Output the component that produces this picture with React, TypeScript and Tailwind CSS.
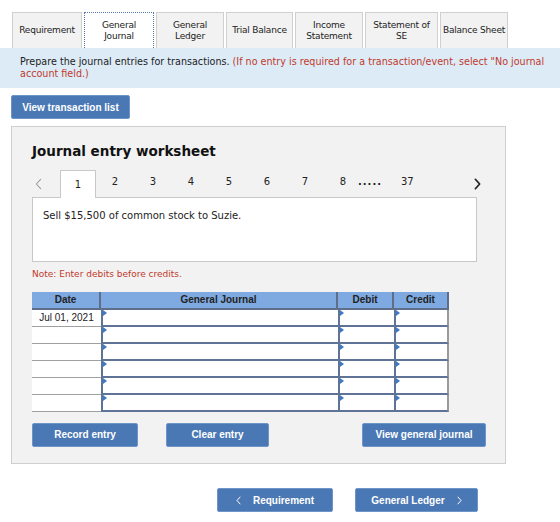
import React from 'react';

const tabs = [
  { label: ['Requirement'], w: 'w-[70px]' },
  { label: ['General', 'Journal'], w: 'w-[70px]', active: true },
  { label: ['General', 'Ledger'], w: 'w-[68px]' },
  { label: ['Trial Balance'], w: 'w-[67px]' },
  { label: ['Income', 'Statement'], w: 'w-[68px]' },
  { label: ['Statement of', 'SE'], w: 'w-[73px]' },
  { label: ['Balance Sheet'], w: 'w-[68px]' },
];

const pages = ['2', '3', '4', '5', '6', '7', '8'];

function Arrow() {
  return <span className="absolute left-0 top-0 w-0 h-0 border-t-[3px] border-b-[3px] border-l-[4px] border-t-transparent border-b-transparent border-l-[#3d78c9]" />;
}

function Chevron({ dir, className = '', stroke = 1.5 }: { dir: 'l' | 'r'; className?: string; stroke?: number }) {
  return (
    <svg viewBox="0 0 8 14" className={className} fill="none" stroke="currentColor" strokeWidth={stroke} strokeLinecap="round" strokeLinejoin="round">
      {dir === 'l' ? <path d="M6.5 1.5 1.5 7l5 5.5" /> : <path d="M1.5 1.5 6.5 7l-5 5.5" />}
    </svg>
  );
}

function Btn({ children, className = '' }: { children: React.ReactNode; className?: string }) {
  return (
    <button
      className={`h-[24px] bg-[#4a78b4] text-white text-[10px] font-bold rounded-[2px] border border-[#6e95c8] flex items-center justify-center gap-[12px] ${className}`}
      style={{ fontFamily: '"Liberation Sans", Arial, sans-serif' }}
    >
      {children}
    </button>
  );
}

export default function App() {
  const rows = ['Jul 01, 2021', '', '', '', '', ''];
  return (
    <div className="w-[560px] h-[522px] bg-white overflow-hidden text-[#222]" style={{ fontFamily: '"DejaVu Sans", Verdana, sans-serif' }}>
      <div className="flex gap-[2px] pl-[12px] pt-[12px]">
        {tabs.map((t, i) => (
          <div
            key={i}
            className={`${t.w} h-[36px] flex flex-col items-center justify-center text-[9px] leading-[11px] text-center tracking-[-0.2px] ${t.active ? 'bg-white border border-dotted border-[#5577aa] border-b-0' : 'bg-[#f2f2f2] border border-[#d0d0d0] border-b-0'}`}
          >
            {t.label.map((l, j) => <span key={j}>{l}</span>)}
          </div>
        ))}
      </div>

      <div className="h-[40px] bg-[#ddebf7] pl-[20px] pt-[8px] text-[9.6px] leading-[12px] whitespace-nowrap overflow-hidden">
        <div>Prepare the journal entries for transactions. <span className="text-[#c0392b]">(If no entry is required for a transaction/event, select "No journal</span></div>
        <div className="text-[#c0392b]">account field.)</div>
      </div>

      <div className="pl-[11px] pt-[7px]">
        <Btn className="w-[119px]">View transaction list</Btn>
      </div>

      <div className="ml-[11px] mt-[7px] w-[495px] h-[338px] bg-[#f2f2f2] border border-[#cfcfcf] pl-[20px] pt-[14px]">
        <div className="text-[13.5px] font-bold text-[#111]">Journal entry worksheet</div>

        <div className="flex items-end mt-[8px] h-[28px] text-[10px]">
          <span className="w-[28px] pl-[3px] pb-[7px] text-[#9a9a9a]"><Chevron dir="l" className="w-[7px] h-[12px]" stroke={1.2} /></span>
          <div className="w-[36px] h-[28px] bg-white border border-[#c8c8c8] border-b-0 flex items-center justify-center relative top-[1px]">1</div>
          {pages.map(p => (
            <span key={p} className="w-[38px] text-center pb-[8px]">{p}</span>
          ))}
          <span className="pb-[8px] tracking-[1px] -ml-[4px] font-bold">.....</span>
          <span className="pb-[8px] ml-[19px]">37</span>
          <span className="pb-[7px] ml-[60px] text-[#222]"><Chevron dir="r" className="w-[7px] h-[12px]" stroke={2} /></span>
        </div>

        <div className="w-[445px] h-[65px] bg-white border border-[#c8c8c8] pl-[10px] pt-[10px] text-[10px]">
          Sell $15,500 of common stock to Suzie.
        </div>

        <div className="mt-[6px] text-[9px] text-[#c0392b]">Note: Enter debits before credits.</div>

        <div className="mt-[10px] w-[417px]" style={{ fontFamily: '"Liberation Sans", Arial, sans-serif' }}>
          <div className="grid grid-cols-[69px_237px_56px_55px] h-[18px] bg-[#7eaae1] text-[10px] font-bold text-[#222] border-b-2 border-[#5f6f8a]">
            <div className="flex items-center justify-center border-r-2 border-[#5f6f8a]">Date</div>
            <div className="flex items-center justify-center border-r-2 border-[#5f6f8a]">General Journal</div>
            <div className="flex items-center justify-center border-r-2 border-[#5f6f8a]">Debit</div>
            <div className="flex items-center justify-center border-r-2 border-[#5f6f8a]">Credit</div>
          </div>
          {rows.map((d, i) => (
            <div key={i} className="grid grid-cols-[69px_237px_56px_55px] h-[17px]">
              <div className="bg-white border-b border-[#a0a0a0] flex items-center justify-center text-[10px]">{d}</div>
              <div className="relative bg-white border-l-2 border-b-2 border-[#5f7396]"><Arrow /></div>
              <div className="relative bg-white border-l-2 border-b-2 border-[#5f7396]"><Arrow /></div>
              <div className="relative bg-white border-l-2 border-r-2 border-b-2 border-[#5f7396] border-r-[#9a9a9a]"><Arrow /></div>
            </div>
          ))}
        </div>

        <div className="flex mt-[11px]">
          <Btn className="w-[106px]">Record entry</Btn>
          <Btn className="w-[103px] ml-[28px]">Clear entry</Btn>
          <Btn className="w-[124px] ml-[93px]">View general journal</Btn>
        </div>
      </div>

      <div className="flex pl-[217px] mt-[24px] gap-[22px]">
        <Btn className="w-[116px]"><Chevron dir="l" className="w-[5px] h-[9px]" stroke={1.6} />Requirement</Btn>
        <Btn className="w-[123px]">General Ledger<Chevron dir="r" className="w-[5px] h-[9px]" stroke={1.6} /></Btn>
      </div>
    </div>
  );
}
